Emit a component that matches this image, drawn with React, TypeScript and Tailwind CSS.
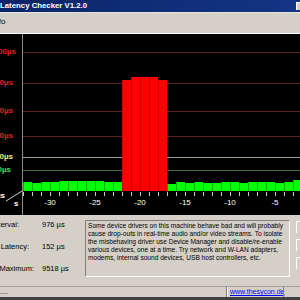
import React from "react";

const greenTops: Record<number, number> = {
  0: 182, 1: 183, 2: 182, 3: 182, 4: 181, 5: 181, 6: 181, 7: 181, 8: 181, 9: 182, 10: 182,
  16: 184, 17: 182, 18: 183, 19: 182, 20: 183, 21: 183, 22: 182, 23: 182, 24: 183, 25: 182,
  26: 182, 27: 182, 28: 183, 29: 182, 30: 180,
};
const redTops: Record<number, number> = { 11: 80, 12: 77, 13: 77, 14: 77, 15: 80 };

const grid = [
  { y: 18, color: "#5e2222", label: "10000µs", end: 16, text: "#e02020" },
  { y: 49, color: "#5e2222", label: "5000µs", end: 13, text: "#e02020" },
  { y: 77, color: "#5e2222", label: "2000µs", end: 13, text: "#e02020" },
  { y: 102, color: "#5e2222", label: "1000µs", end: 13, text: "#e02020" },
  { y: 123, color: "#a0a08c", label: "500µs", end: 13, text: "#f0f070" },
  { y: 136, color: "#3c6a3c", label: "50µs", end: 11, text: "#40e040" },
];

const xLabels = [
  { x: 50, t: "-30" },
  { x: 95, t: "-25" },
  { x: 140, t: "-20" },
  { x: 185, t: "-15" },
  { x: 230, t: "-10" },
  { x: 275, t: "-5" },
];

export default function App() {
  const bars = Array.from({ length: 31 }, (_, k) => k);
  const ticks = Array.from({ length: 32 }, (_, k) => k);
  return (
    <div
      className="w-[300px] h-[300px] overflow-hidden flex flex-col bg-[#d4d0c8]"
      style={{ fontFamily: '"Liberation Sans", Arial, sans-serif' }}
    >
      {/* title bar */}
      <div className="h-[12px] flex items-center bg-gradient-to-r from-[#0a246a] to-[#143584] relative shrink-0">
        <div className="w-0 flex justify-end whitespace-nowrap text-white font-bold text-[7.8px] leading-[12px]">
          DPC&nbsp;
        </div>
        <span className="text-white font-bold text-[7.8px] leading-[12px] whitespace-nowrap">
          Latency Checker V1.2.0
        </span>
        <div className="absolute right-0 top-[2px] w-[4px] h-[8px] bg-[#d4d0c8] border-l border-t border-white" />
      </div>
      {/* menu bar */}
      <div className="h-[21px] shrink-0 flex items-start pt-[4px] border-t border-[#e8e6e0]">
        <span className="text-[8px] leading-[10px] text-black -ml-[8px]">Info</span>
      </div>
      <div className="h-[1px] bg-white shrink-0" />
      {/* chart */}
      <div className="relative h-[181px] bg-black shrink-0 overflow-hidden">
        <div className="absolute left-[22px] top-0 bottom-0 w-[1px] bg-[#8c8c8c]" />
        {grid.map((g, i) => (
          <React.Fragment key={i}>
            <div
              className="absolute left-[23px] right-0 h-[1px]"
              style={{ top: g.y, backgroundColor: g.color }}
            />
            <div
              className="absolute flex justify-end whitespace-nowrap font-bold text-[8px] leading-[10px]"
              style={{ top: g.y - 5, right: 300 - g.end, width: 40, color: g.text }}
            >
              {g.label}
            </div>
          </React.Fragment>
        ))}
        <div className="absolute left-[23px] top-0 h-[157px] flex items-end">
          {bars.map((k) => {
            const red = redTops[k];
            const top = red ?? greenTops[k] ?? 182;
            const h = 191 - top;
            return (
              <div
                key={k}
                className={
                  red
                    ? "w-[9px] shrink-0 bg-[#ff0000] border-l border-[#c80000]"
                    : "w-[9px] shrink-0 bg-[#00ff00] border-l border-[#00a800]"
                }
                style={{ height: h }}
              />
            );
          })}
        </div>
        {ticks.map((k) => (
          <div
            key={k}
            className="absolute top-[158px] w-[1px] h-[4px] bg-[#c8c8c8]"
            style={{ left: 23 + 9 * k }}
          />
        ))}
        {xLabels.map((l) => (
          <div
            key={l.t}
            className="absolute top-[164px] w-[30px] text-center text-white text-[8px] leading-[10px]"
            style={{ left: l.x - 15 }}
          >
            {l.t}
          </div>
        ))}
        <svg className="absolute left-0 top-[156px]" width="24" height="14">
          <line x1="22" y1="1" x2="6" y2="11" stroke="#d0d0d0" strokeWidth="1" />
        </svg>
        <div className="absolute right-[295px] top-[158px] text-white text-[8px] leading-[8px] font-bold whitespace-nowrap">
          µs
        </div>
        <div className="absolute left-[14px] top-[166px] text-white text-[8px] leading-[8px] font-bold">
          s
        </div>
      </div>
      {/* bottom panel */}
      <div className="h-[71px] shrink-0 flex border-t border-[#d4d0c8]">
        <div className="w-[85px] shrink-0 flex flex-col gap-[12px] pt-[4px] text-[7.5px] leading-[10px] text-black">
          <div className="flex h-[10px]">
            <div className="w-[19px] flex justify-end whitespace-nowrap">Interval:</div>
            <div className="ml-[23px] whitespace-nowrap">976 µs</div>
          </div>
          <div className="flex h-[10px]">
            <div className="w-[29px] flex justify-end whitespace-nowrap">Current Latency:</div>
            <div className="ml-[13px] whitespace-nowrap">152 µs</div>
          </div>
          <div className="flex h-[10px]">
            <div className="w-[34px] flex justify-end whitespace-nowrap">Absolute Maximum:</div>
            <div className="ml-[8px] whitespace-nowrap">9518 µs</div>
          </div>
        </div>
        <div className="mt-[4px] w-[205px] h-[57px] shrink-0 border border-t-[#808080] border-l-[#808080] border-b-white border-r-white px-[2px] pt-[1px] text-[6.6px] leading-[8px] text-black">
          Some device drivers on this machine behave bad and will probably cause drop-outs in
          real-time audio and/or video streams. To isolate the misbehaving driver use Device
          Manager and disable/re-enable various devices, one at a time. Try network and W-LAN
          adapters, modems, internal sound devices, USB host controllers, etc.
        </div>
        <div className="ml-[6px] flex flex-col gap-[6px] pt-[5px]">
          <div className="w-[10px] h-[12px] border-l border-t border-white" />
          <div className="w-[10px] h-[12px] border-l border-t border-white" />
          <div className="w-[10px] h-[12px] border-l border-t border-white" />
        </div>
      </div>
      {/* status bar */}
      <div className="h-[11px] shrink-0 flex border-t border-[#a0a0a0]">
        <div className="w-[227px] h-full border-r border-[#808080] flex items-center text-[7px] leading-[8px] text-black">
          ....
        </div>
        <div className="w-[56px] h-full border-l border-white flex items-center pl-[2px] text-[7px] leading-[8px] text-[#0000ff] underline whitespace-nowrap">
          www.thesycon.de
        </div>
        <div className="flex-1 h-full border-l border-[#808080]" />
      </div>
      <div className="flex-1 bg-[#404040]" />
    </div>
  );
}
